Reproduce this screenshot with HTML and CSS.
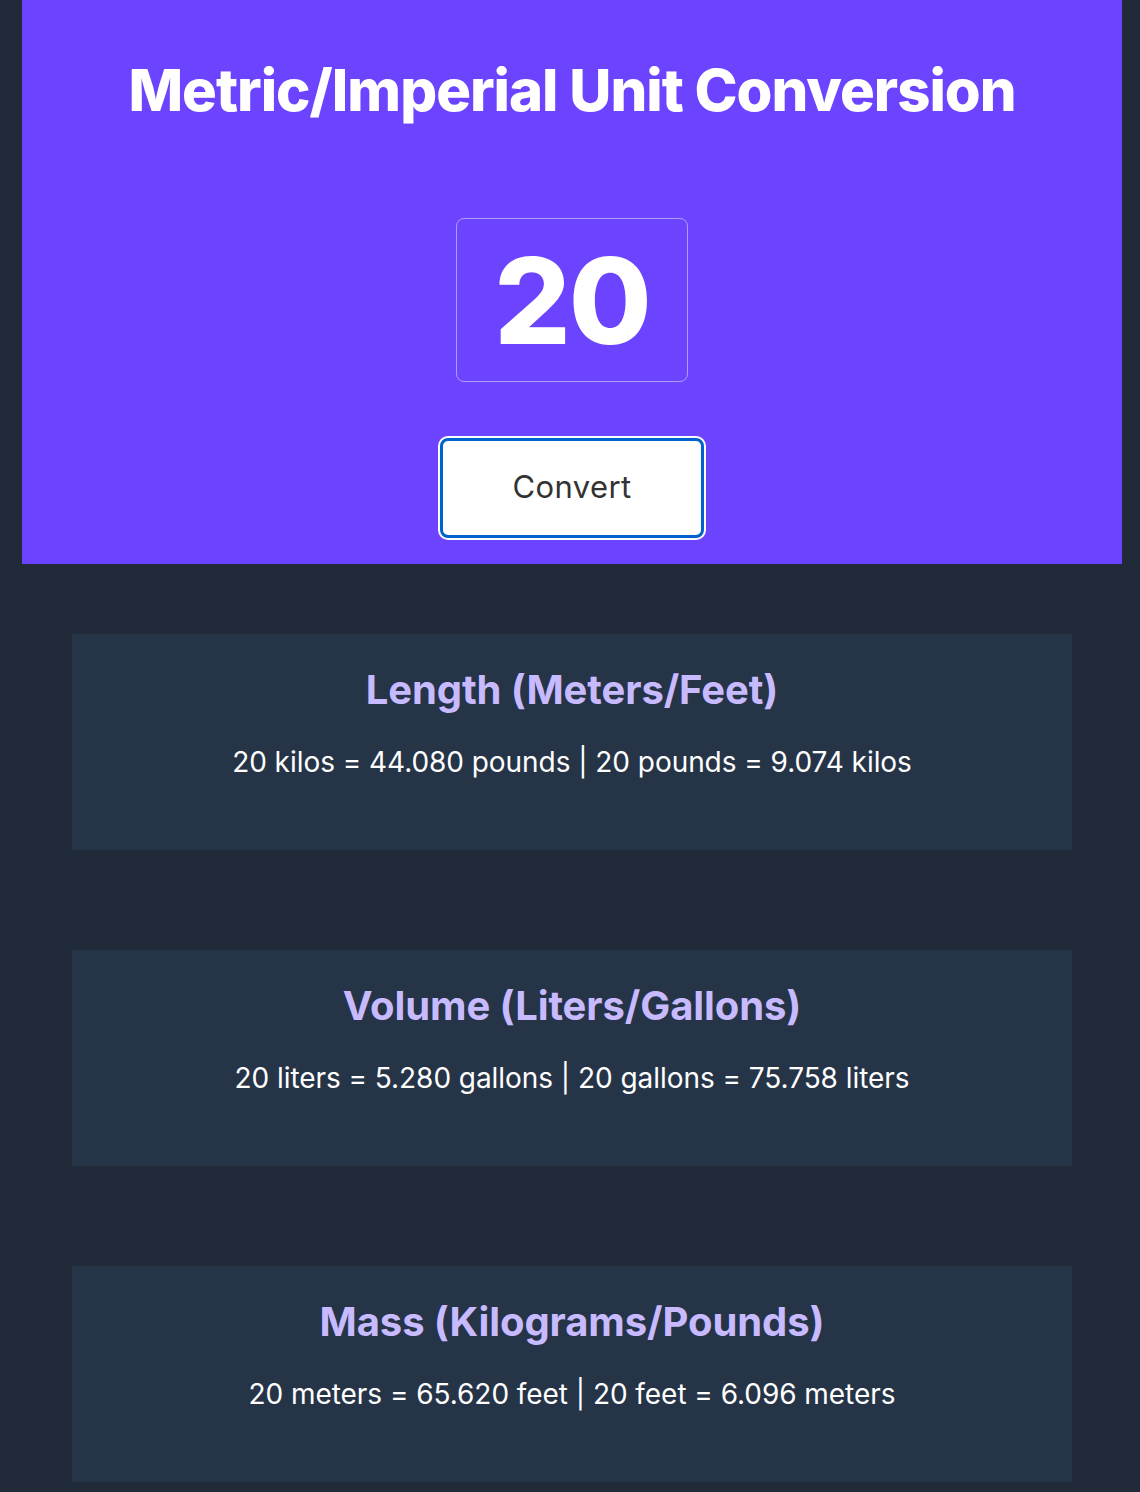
FILE: index.html
```html
<!DOCTYPE html>
<html lang="en">
<head>
<meta charset="utf-8">
<title>Metric/Imperial Unit Conversion</title>
<link rel="stylesheet" href="styles.css">
</head>
<body>
<div class="page">
  <header class="hero">
    <h1 class="hero-title">Metric/Imperial Unit Conversion</h1>
    <div class="number-box">20</div>
    <button class="convert-btn" type="button">Convert</button>
  </header>
  <main class="results">
    <section class="card">
      <h2 class="card-title">Length (Meters/Feet)</h2>
      <p class="card-text">20 kilos = 44.080 pounds | 20 pounds = 9.074 kilos</p>
    </section>
    <section class="card">
      <h2 class="card-title">Volume (Liters/Gallons)</h2>
      <p class="card-text">20 liters = 5.280 gallons | 20 gallons = 75.758 liters</p>
    </section>
    <section class="card">
      <h2 class="card-title">Mass (Kilograms/Pounds)</h2>
      <p class="card-text">20 meters = 65.620 feet | 20 feet = 6.096 meters</p>
    </section>
  </main>
</div>
</body>
</html>
```

FILE: styles.css
```css
* { box-sizing: border-box; }

html, body {
  margin: 0;
  padding: 0;
  background: #212a38;
  font-family: Inter, "Noto Sans", sans-serif;
}

.page {
  width: 1100px;
  margin-left: 22px;
}

.hero {
  background: #6c43ff;
  display: flex;
  flex-direction: column;
  align-items: center;
  padding: 55px 0 26px;
}

.hero-title {
  margin: 0;
  color: #fff;
  font-size: 58px;
  line-height: 70px;
  font-weight: 800;
  letter-spacing: -1px;
}

.number-box {
  margin-top: 93px;
  width: 232px;
  height: 164px;
  border: 1px solid #b09cff;
  border-radius: 8px;
  display: flex;
  align-items: center;
  justify-content: center;
  color: #fff;
  font-size: 120px;
  font-weight: 800;
  letter-spacing: -2px;
}

.convert-btn {
  margin-top: 56px;
  width: 264px;
  height: 100px;
  padding: 0 0 4px;
  background: #fff;
  border: 3px solid #0062cc;
  border-radius: 8px;
  box-shadow: 0 0 0 2px #fff;
  color: #333;
  font-family: Inter, "Noto Sans", sans-serif;
  font-size: 31px;
  font-weight: 400;
  letter-spacing: 0.4px;
}

.results {
  display: flex;
  flex-direction: column;
  gap: 100px;
  padding: 70px 50px 0;
}

.card {
  background: #263447;
  height: 216px;
  padding-top: 32px;
  text-align: center;
}

.card-title {
  margin: 0;
  color: #c7baff;
  font-size: 40px;
  line-height: 48px;
  font-weight: 700;
  letter-spacing: -0.1px;
}

.card-text {
  margin: 31px 0 0;
  color: #fff;
  font-size: 28px;
  line-height: 34px;
  font-weight: 400;
  letter-spacing: -0.05px;
}
```
